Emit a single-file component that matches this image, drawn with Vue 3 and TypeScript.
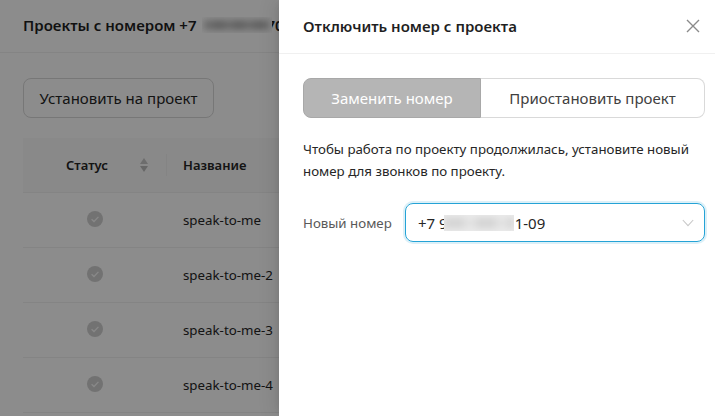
<script setup lang="ts">
const rows: string[] = ['speak-to-me', 'speak-to-me-2', 'speak-to-me-3', 'speak-to-me-4']
</script>

<template>
  <div class="page">
    <div class="under">
      <header class="head">
        <span class="head-title">Проекты с номером +7</span>
        <span class="head-blur"><span class="head-blur-core"></span></span>
        <span class="head-title head-rest">70</span>
      </header>
      <div class="content">
        <button class="install">Установить на проект</button>
        <div class="table">
          <div class="thead">
            <div class="th-status">
              <span class="th-label">Статус</span>
              <svg class="sorter" width="8" height="14" viewBox="0 0 8 14">
                <path d="M4 0 8 6H0z" fill="#c6c6c6" />
                <path d="M4 14 0 8h8z" fill="#bcbcbc" />
              </svg>
            </div>
            <div class="th-name">Название</div>
          </div>
          <div v-for="row in rows" :key="row" class="row">
            <div class="cell-status">
              <svg width="16" height="16" viewBox="0 0 16 16">
                <circle cx="8" cy="8" r="8" fill="#d0d0d0" />
                <path d="M4.6 8.2 7 10.5l4.4-4.6" fill="none" stroke="#f8f8f8" stroke-width="1.3" />
              </svg>
            </div>
            <div class="cell-name">{{ row }}</div>
          </div>
        </div>
      </div>
    </div>

    <div class="mask"></div>

    <aside class="drawer">
      <div class="drawer-head">
        <h2 class="drawer-title">Отключить номер с проекта</h2>
        <svg class="close" width="14" height="14" viewBox="0 0 14 14">
          <path d="M1 1l12 12M13 1 1 13" stroke="#8a8a8a" stroke-width="1.4" fill="none" />
        </svg>
      </div>
      <div class="drawer-body">
        <div class="segments">
          <div class="seg seg-on">Заменить номер</div>
          <div class="seg seg-off">Приостановить проект</div>
        </div>
        <p class="hint">Чтобы работа по проекту продолжилась, установите новый номер для звонков по проекту.</p>
        <div class="field">
          <label class="field-label">Новый номер</label>
          <div class="select">
            <span class="value">+7 9</span>
            <span class="value-blur"><span class="value-blur-core"></span></span>
            <span class="value value-end">1-09</span>
            <svg class="chev" width="12" height="8" viewBox="0 0 12 8">
              <path d="M.8 1 6 6.6 11.2 1" fill="none" stroke="#c8c8c8" stroke-width="1.1" />
            </svg>
          </div>
        </div>
      </div>
    </aside>
  </div>
</template>

<style>
html, body { margin: 0; background: #fff; }
</style>

<style scoped>
.page {
  position: relative;
  width: 715px;
  height: 416px;
  overflow: hidden;
  background: #fff;
  font-family: "Noto Sans", "Open Sans", sans-serif;
  color: #262626;
}
.under { width: 715px; }
.head {
  height: 53px;
  box-sizing: border-box;
  border-bottom: 1px solid #f0f0f0;
  padding-left: 23px;
  padding-bottom: 2px;
  display: flex;
  align-items: center;
  white-space: nowrap;
}
.head-title { font-size: 15px; font-weight: 600; color: #1f1f1f; }
.head-blur {
  position: relative;
  width: 70px;
  height: 16px;
  margin-left: 5px;
  background: #fff;
  overflow: hidden;
  display: flex;
  align-items: center;
}
.head-blur-core {
  width: 100%;
  height: 10px;
  margin: 0 2px;
  background: repeating-linear-gradient(90deg, #c2c2c2 0 10px, #b2b2b2 10px 20px);
  filter: blur(3px);
}
.head-rest { margin-left: -5px; }
.content { padding: 25px 23px 0; }
.install {
  display: block;
  width: 191px;
  height: 40px;
  box-sizing: border-box;
  border: 1px solid #d9d9d9;
  border-radius: 8px;
  background: #fff;
  font: inherit;
  font-size: 15px;
  color: #262626;
  padding: 0;
}
.table { margin-top: 20px; width: 692px; }
.thead {
  height: 55px;
  box-sizing: border-box;
  display: flex;
  align-items: center;
  background: #fafafa;
  border-bottom: 1px solid #f0f0f0;
  font-size: 13px;
  font-weight: 600;
}
.th-status {
  width: 144px;
  height: 22px;
  box-sizing: border-box;
  border-right: 1px solid #f0f0f0;
  display: flex;
  align-items: center;
  padding-left: 43px;
  flex: none;
}
.th-label { width: 74px; }
.sorter { display: block; }
.th-name { padding-left: 16px; }
.row {
  height: 55px;
  box-sizing: border-box;
  border-bottom: 1px solid #f0f0f0;
  display: flex;
  align-items: center;
  font-size: 13.3px;
}
.cell-status {
  width: 144px;
  flex: none;
  display: flex;
  justify-content: center;
  margin-top: -2px;
}
.cell-status svg { display: block; }
.cell-name { padding-left: 16px; white-space: nowrap; }
.mask {
  position: absolute;
  inset: 0;
  background: rgba(0, 0, 0, 0.45);
}
.drawer {
  position: absolute;
  top: 0;
  right: 0;
  bottom: 0;
  width: 436px;
  background: #fff;
  box-shadow: -6px 0 16px rgba(0, 0, 0, 0.08), -3px 0 6px -4px rgba(0, 0, 0, 0.12);
}
.drawer-head {
  height: 54px;
  box-sizing: border-box;
  border-bottom: 1px solid #f0f0f0;
  padding: 0 15px 2px 24px;
  display: flex;
  align-items: center;
  justify-content: space-between;
}
.drawer-title {
  margin: 0;
  font-size: 15px;
  font-weight: 600;
  color: #1f1f1f;
}
.close { display: block; }
.drawer-body { padding: 24px 10px 0 24px; }
.segments {
  display: flex;
  height: 40px;
  font-size: 15px;
}
.seg {
  box-sizing: border-box;
  display: flex;
  align-items: center;
  justify-content: center;
}
.seg-on {
  width: 178px;
  background: #b5b5b5;
  color: #fff;
  border: 1px solid #a8a8a8;
  border-radius: 8px 0 0 8px;
}
.seg-off {
  flex: 1;
  border: 1px solid #d9d9d9;
  border-left: 0;
  border-radius: 0 8px 8px 0;
  color: #404040;
}
.hint {
  margin: 20px 0 0;
  font-size: 13.3px;
  line-height: 22px;
  color: #262626;
}
.field {
  margin-top: 21px;
  display: flex;
  align-items: center;
  justify-content: space-between;
}
.field-label { font-size: 13.3px; color: #595959; white-space: nowrap; }
.select {
  width: 300px;
  height: 39px;
  box-sizing: border-box;
  border: 1px solid #25a3d6;
  border-radius: 8px;
  box-shadow: 0 0 0 2px rgba(37, 163, 214, 0.16);
  padding-left: 12px;
  padding-right: 10px;
  display: flex;
  align-items: center;
  font-size: 15px;
  color: #262626;
}
.value-blur {
  position: relative;
  width: 70px;
  height: 16px;
  margin-left: -4px;
  background: #ececec;
  overflow: hidden;
  display: flex;
  align-items: center;
}
.value-blur-core {
  width: 100%;
  height: 12px;
  background: repeating-linear-gradient(90deg, #d6d6d6 0 20px, #e2e2e2 20px 32px);
  filter: blur(3px);
}
.value-end { margin-left: 1px; }
.chev { margin-left: auto; display: block; }
</style>
